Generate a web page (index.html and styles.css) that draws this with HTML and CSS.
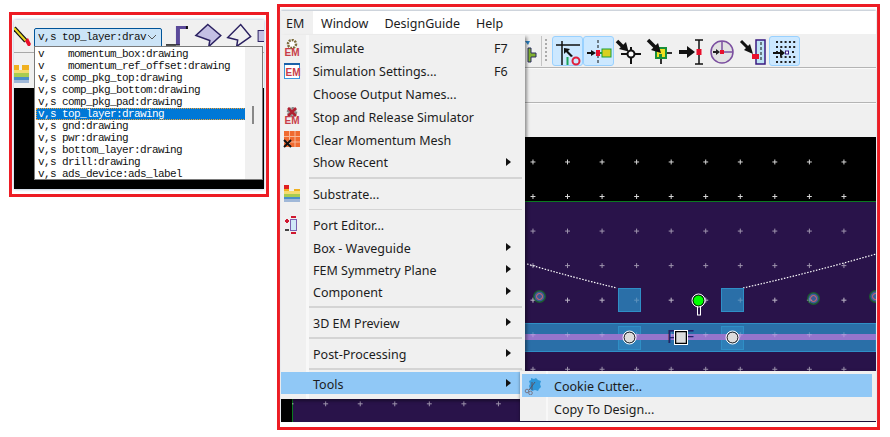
FILE: index.html
```html
<!DOCTYPE html>
<html>
<head>
  <meta charset="utf-8">
  <title>EM menu</title>
  <link rel="stylesheet" href="styles.css">
</head>
<body>
<div class="page">

  <!-- left crop: layer dropdown -->
  <div class="frame frame-left">
    <div class="mini">
      <div class="mini-bar">
        <svg class="pencil" width="18" height="22" viewBox="0 0 18 22">
          <path d="M0 3l12 13" stroke="#111" stroke-width="4.500"/>
          <path d="M0 3l12 13" stroke="#e8d820" stroke-width="2"/>
          <path d="M11 16l3-3 3 6-1 2-2 0z" fill="#e8102c"/>
        </svg>
        <div class="combo">
          <span class="combo-text">v,s top_layer:drav</span>
          <svg width="10" height="6" viewBox="0 0 10 6"><path d="M1 1l4 4 4-4" fill="none" stroke="#555" stroke-width="1"/></svg>
        </div>
        <svg class="mini-icons" width="100" height="26" viewBox="0 0 100 26">
          <path d="M2 22h10" fill="none" stroke="#111" stroke-width="1.500"/>
          <path d="M12 22V3h12v3h-8v16z" fill="#5b4a9a"/>
          <path d="M23 3v3" stroke="#111" stroke-width="2"/>
          <path d="M12 22h4" stroke="#111" stroke-width="1"/>
          <path d="M44 1.500L57 12.500 45 23.500 46 17.500 32 12.500z" fill="#c4c0e4" stroke="#2a2060" stroke-width="1.500"/>
          <path d="M73 23.500L87 13.500 77 1.500 64 14.500 74 17 73 23.500" fill="none" stroke="#2a2060" stroke-width="1.500"/>
          <rect x="94.500" y="7.500" width="8" height="11" fill="#c4c0e4" stroke="#2a2060"/>
        </svg>
      </div>
      <div class="mini-band">
        <svg width="15" height="18" viewBox="0 0 15 18">
          <rect y="0" width="5" height="5" fill="#f0b020"/><rect x="8" y="0" width="7" height="5" fill="#f0b020"/>
          <rect y="5" width="15" height="3" fill="#f4dc70"/><rect y="8" width="15" height="4" fill="#a8cc50"/>
          <rect y="12" width="15" height="3" fill="#4a90c8"/><rect y="15" width="15" height="3" fill="#a0b8d8"/>
        </svg>
      </div>
      <div class="mini-canvas"></div>
      <div class="layer-list">
        <div class="layer-row">v    momentum_box:drawing</div>
        <div class="layer-row">v    momentum_ref_offset:drawing</div>
        <div class="layer-row">v,s comp_pkg_top:drawing</div>
        <div class="layer-row">v,s comp_pkg_bottom:drawing</div>
        <div class="layer-row">v,s comp_pkg_pad:drawing</div>
        <div class="layer-row selected">v,s top_layer:drawing</div>
        <div class="layer-row">v,s gnd:drawing</div>
        <div class="layer-row">v,s pwr:drawing</div>
        <div class="layer-row">v,s bottom_layer:drawing</div>
        <div class="layer-row">v,s drill:drawing</div>
        <div class="layer-row">v,s ads_device:ads_label</div>
        <div class="list-scroll"><div class="list-thumb"></div></div>
      </div>
    </div>
  </div>

  <!-- right crop: EM menu over layout window -->
  <div class="frame frame-right">
    <div class="window">
      <div class="menubar">
        <span class="menubar-item open">EM</span>
        <span class="menubar-item">Window</span>
        <span class="menubar-item">DesignGuide</span>
        <span class="menubar-item">Help</span>
      </div>

      <div class="toolbar">
        <svg class="tool-partial" width="12" height="24" viewBox="0 0 12 24">
          <path d="M0 2h5l-2 4z" fill="#2a80c0"/>
          <path d="M3 9h3v5h5v4H6v5H3z" fill="#80b030" stroke="#2a2a60" stroke-width="1"/>
        </svg>
        <div class="tool-sep"></div>
        <div class="tool-grip"></div>
        <div class="tool on">
          <svg width="31" height="29" viewBox="0 0 31 29">
            <path d="M4 8h24M10 4v24" stroke="#111" stroke-width="1.500" fill="none"/>
            <path d="M12 11l6 1-2 2 5 5-2 1-5-5-2 2z" fill="#111"/>
            <path d="M15.500 20v8" stroke="#1aa55a" stroke-width="2"/>
            <ellipse cx="24" cy="24" rx="3.500" ry="3.500" fill="none" stroke="#e0203c" stroke-width="2"/>
          </svg>
        </div>
        <div class="tool on">
          <svg width="31" height="29" viewBox="0 0 31 29">
            <path d="M15 3v24" stroke="#111" stroke-dasharray="3 2" fill="none"/>
            <path d="M4 15h4v-2l5 3-5 3v-2H4z" fill="#111"/>
            <rect x="13" y="13" width="4" height="6" fill="#e8102c"/>
            <rect x="19" y="12" width="9" height="8" fill="#d8d020" stroke="#1a9f3a"/>
            <path d="M17 16h2" stroke="#1a9f3a" stroke-width="2"/>
          </svg>
        </div>
        <div class="tool">
          <svg width="31" height="29" viewBox="0 0 31 29">
            <path d="M7 17h20M17 10v17" stroke="#111" stroke-width="2"/>
            <circle cx="17" cy="17" r="3.500" fill="#fff" stroke="#111" stroke-width="2"/>
            <path d="M3 4l7 7" stroke="#111" stroke-width="3.500"/>
            <path d="M14.500 14.500L5 12l7-7z" fill="#111"/>
          </svg>
        </div>
        <div class="tool">
          <svg width="31" height="29" viewBox="0 0 31 29">
            <path d="M21 16h6M16 21v6" stroke="#333" stroke-width="2"/>
            <rect x="11" y="11" width="10" height="10" fill="#f0e020" stroke="#1a8f3a" stroke-width="2"/>
            <rect x="14" y="17" width="3" height="3" fill="#1a8f3a"/>
            <path d="M3 3l8 8" stroke="#111" stroke-width="3.500"/>
            <path d="M16 16L6 13l7-7z" fill="#111"/>
          </svg>
        </div>
        <div class="tool">
          <svg width="31" height="29" viewBox="0 0 31 29">
            <path d="M23 3v24M19 3h8M19 27h8" stroke="#111" stroke-width="1.500" fill="none"/>
            <path d="M3 13h8v-4l8 6-8 6v-4H3z" fill="#111"/>
            <rect x="20.500" y="12" width="5" height="6" fill="#e8102c"/>
          </svg>
        </div>
        <div class="tool">
          <svg width="31" height="29" viewBox="0 0 31 29">
            <circle cx="15" cy="15" r="11" fill="#e2e2e2" stroke="#7b4fa0" stroke-width="1.500"/>
            <path d="M15 4v11h11" fill="none" stroke="#7b4fa0" stroke-width="1.500"/>
            <path d="M6 14h3v-2l4 3-4 3v-2H6z" fill="#222"/>
            <rect x="13" y="13" width="4" height="4" fill="#e8102c"/>
          </svg>
        </div>
        <div class="tool">
          <svg width="31" height="29" viewBox="0 0 31 29">
            <path d="M18 3h9v24h-9z" fill="#bfe4f4" stroke="#3a1a80" stroke-width="1.500"/>
            <path d="M23 5v20" stroke="#111" stroke-dasharray="3 2"/>
            <path d="M3 4l7 7" stroke="#111" stroke-width="3"/>
            <path d="M15 17L6 13l6-6z" fill="#111"/>
            <rect x="14" y="17" width="7" height="5" fill="#e8102c"/>
          </svg>
        </div>
        <div class="tool on">
          <svg width="31" height="29" viewBox="0 0 31 29">
            <path d="M7 5h20M7 10h20M7 15h4M23 15h4M7 20h20M7 25h20" stroke="#222" stroke-width="2" stroke-dasharray="2 2.300" fill="none"/>
            <path d="M4 15h7v-3l5 4-5 4v-3H4z" fill="#111"/>
            <rect x="16.500" y="14" width="3" height="3" fill="#fff" stroke="#3a1a80"/>
          </svg>
        </div>
      </div>
      <div class="band band-first"></div>
      <div class="band"></div>

      <svg class="canvas" width="595" height="285" viewBox="281 137 595 285">
        <defs>
          <pattern id="grid" patternUnits="userSpaceOnUse" x="-0.5" y="-0.5" width="34.550" height="34.550" patternTransform="translate(12.750 21.800)">
            <path d="M0 2.500h5M2.500 0v5" stroke="#fff" stroke-width="1" shape-rendering="crispEdges"/>
          </pattern>
          <g id="via">
            <circle r="6.500" fill="#1c5a30"/>
            <circle r="5" fill="#3a5c98"/>
            <circle r="3" fill="none" stroke="#e06868" stroke-width="1"/>
          </g>
        </defs>
        <rect x="281" y="137" width="595" height="64" fill="#000"/>
        <rect x="281" y="201" width="595" height="221" fill="#29134a"/>
        <path d="M281 201.500h595" stroke="#0a7a20" stroke-width="1"/>
        <rect x="281" y="399" width="11" height="23" fill="#000"/>
        <path d="M292.500 399v23" stroke="#0a7a20"/>
        <rect x="292" y="202" width="584" height="220" fill="url(#grid)" opacity="0.55"/>
        <rect x="292" y="137" width="584" height="64" fill="url(#grid)" opacity="0.85"/>
        <path d="M527 264Q575 278 617 288M743 288Q810 273 876 254" fill="none" stroke="#fff" stroke-width="1.200" stroke-dasharray="1.500 1.500"/>
        <rect x="618.500" y="288.500" width="22" height="23" fill="#2a6fa8" stroke="#2f8fc6"/>
        <rect x="721.500" y="288.500" width="22" height="23" fill="#2a6fa8" stroke="#2f8fc6"/>
        <use href="#via" x="539.500" y="296.500"/>
        <use href="#via" x="813.500" y="298.500"/>
        <use href="#via" x="875.500" y="296.500"/>
        <rect x="281" y="323.500" width="595" height="28" fill="#2a6fa8" stroke="#2f8fc6"/>
        <rect x="618.500" y="326.500" width="22" height="23" fill="#2e7fb8" stroke="#2f8fc6"/>
        <rect x="721.500" y="326.500" width="22" height="23" fill="#2e7fb8" stroke="#2f8fc6"/>
        <rect x="281" y="334" width="595" height="6" fill="#9575cc"/>
        <rect x="292" y="288" width="584" height="64" fill="url(#grid)" opacity="0.25"/>
        <text x="667" y="343" class="canvas-label">PF</text>
        <circle cx="629.500" cy="337.500" r="5.500" fill="#dcdcdc" stroke="#000" stroke-width="1"/>
        <circle cx="629.500" cy="337.500" r="6.500" fill="none" stroke="#fff" stroke-width="1"/>
        <circle cx="732.500" cy="337.500" r="5.500" fill="#dcdcdc" stroke="#000" stroke-width="1"/>
        <circle cx="732.500" cy="337.500" r="6.500" fill="none" stroke="#fff" stroke-width="1"/>
        <rect x="675.500" y="331.500" width="11" height="12" fill="#dcdcdc" stroke="#000" stroke-width="1.500"/>
        <rect x="674.500" y="330.500" width="13" height="14" fill="none" stroke="#fff"/>
        <rect x="697.500" y="304" width="3" height="11" fill="#29134a" stroke="#fff"/>
        <circle cx="698.500" cy="300.500" r="5.500" fill="#00ff00" stroke="#000"/>
        <circle cx="698.500" cy="300.500" r="6.500" fill="none" stroke="#fff"/>
      </svg>

      <div class="menu">
        <div class="row"><span class="gutter">
          <svg width="18" height="18" viewBox="0 0 18 18"><circle cx="9" cy="5" r="4" fill="#fff" stroke="#7c6c3c" stroke-width="2.500" stroke-dasharray="2 1"/><text x="1.500" y="16.500" class="em-mark">EM</text></svg>
        </span><span class="label">Simulate</span><span class="key">F7</span></div>
        <div class="row"><span class="gutter">
          <svg width="18" height="18" viewBox="0 0 18 18"><rect x="1.500" y="1.500" width="15" height="15" fill="#fff" stroke="#3a96dc"/><rect x="1" y="1" width="16" height="2" fill="#1a60a8"/><text x="2.500" y="14" class="em-mark">EM</text></svg>
        </span><span class="label">Simulation Settings...</span><span class="key">F6</span></div>
        <div class="row"><span class="gutter"></span><span class="label">Choose Output Names...</span></div>
        <div class="row"><span class="gutter">
          <svg width="18" height="18" viewBox="0 0 18 18"><circle cx="9" cy="5" r="4" fill="#aaa" stroke="#888" stroke-width="2.500" stroke-dasharray="2 1"/><path d="M5 1l8 8M13 1l-8 8" stroke="#b02030" stroke-width="2.500"/><text x="1.500" y="17" class="em-mark">EM</text></svg>
        </span><span class="label">Stop and Release Simulator</span></div>
        <div class="row"><span class="gutter">
          <svg width="18" height="18" viewBox="0 0 18 18"><rect x="1" y="1" width="16" height="16" fill="#f06a30"/><path d="M6.500 1v16M12 1v16M1 6.500h16M1 12h16" stroke="#f8b898" stroke-width="1"/><path d="M1 10l7 7M8 10l-7 7" stroke="#111" stroke-width="2"/></svg>
        </span><span class="label">Clear Momentum Mesh</span></div>
        <div class="row"><span class="gutter"></span><span class="label">Show Recent</span><i class="arrow"></i></div>
        <div class="sep"></div>
        <div class="row"><span class="gutter">
          <svg width="18" height="18" viewBox="0 0 18 18"><rect x="1" y="0" width="5" height="4" fill="#e02020"/><rect x="1" y="4" width="5" height="2" fill="#f0b020"/><rect x="11" y="4" width="6" height="2" fill="#f0b020"/><rect x="1" y="6" width="16" height="3" fill="#f4dc70"/><rect x="1" y="9" width="16" height="3" fill="#a8cc50"/><rect x="1" y="12" width="16" height="2" fill="#4a90c8"/><rect x="1" y="14" width="16" height="3" fill="#a0b8d8"/></svg>
        </span><span class="label">Substrate...</span></div>
        <div class="sep"></div>
        <div class="lower">
        <div class="row"><span class="gutter">
          <svg width="18" height="18" viewBox="0 0 18 18"><rect x="7.500" y="3.500" width="6" height="11" fill="#cfe8f8" stroke="#7a60b0"/><path d="M8 1h5M8 17h5" stroke="#d01830" stroke-width="2"/><path d="M2 5h4M4 3v4" stroke="#d01830" stroke-width="2"/><path d="M2 14h4" stroke="#444" stroke-width="2"/></svg>
        </span><span class="label">Port Editor...</span></div>
        <div class="row"><span class="gutter"></span><span class="label">Box - Waveguide</span><i class="arrow"></i></div>
        <div class="row"><span class="gutter"></span><span class="label">FEM Symmetry Plane</span><i class="arrow"></i></div>
        <div class="row"><span class="gutter"></span><span class="label">Component</span><i class="arrow"></i></div>
        <div class="sep"></div>
        <div class="row"><span class="gutter"></span><span class="label">3D EM Preview</span><i class="arrow"></i></div>
        <div class="sep"></div>
        <div class="row"><span class="gutter"></span><span class="label">Post-Processing</span><i class="arrow"></i></div>
        <div class="sep sep-tight"></div>
        <div class="row active"><span class="gutter"></span><span class="label">Tools</span><i class="arrow"></i></div>
        </div>
      </div>

      <div class="submenu">
        <div class="row active"><span class="gutter">
          <svg width="18" height="18" viewBox="0 0 18 18"><path d="M7 1l3 1 2-1 2 2 3 1-1 3 1 3-2 2-1 2-3-1-3 1-2-2-1-3 1-2-1-3 2-1z" fill="#2f96d8"/><path d="M11 5L5 13M8 5l0 8" stroke="#556" stroke-width="1"/><circle cx="3" cy="14" r="1.800" fill="none" stroke="#778"/><circle cx="6.500" cy="16" r="1.800" fill="none" stroke="#778"/></svg>
        </span><span class="label">Cookie Cutter...</span></div>
        <div class="row"><span class="gutter"></span><span class="label">Copy To Design...</span></div>
      </div>
    </div>
  </div>

</div>
</body>
</html>
```
FILE: styles.css
```css
body {
  margin: 0;
  background: #fff;
  font-family: "Noto Sans", sans-serif;
  font-size: 12.5px;
  color: #1c1c1c;
}

.page {
  display: flex;
  align-items: flex-start;
  gap: 8px;
  padding: 4px 0 0 9px;
}

.frame {
  box-sizing: border-box;
  border: 3px solid #ed1c24;
  background: #fff;
}
.frame-left {
  width: 260px;
  height: 185px;
  margin-top: 8px;
  padding: 5px 2px;
}
.frame-right {
  width: 603px;
  height: 426px;
  padding: 4px 1px 5px;
}

/* left crop */
.mini {
  position: relative;
  display: flex;
  flex-direction: column;
  height: 100%;
  background: #f0f0f0;
  box-shadow: 0 0 3px #9db4d0;
}
.mini-bar {
  display: flex;
  align-items: center;
  height: 33px;
  flex: none;
  box-sizing: border-box;
  border-bottom: 1px solid #a8a8a8;
}
.pencil {
  margin: 0 2px 0 0;
}
.combo {
  display: flex;
  align-items: center;
  justify-content: space-between;
  box-sizing: border-box;
  width: 129px;
  height: 19px;
  margin-top: 2px;
  padding: 0 4px 0 3px;
  background: #cce4f7;
  border: 1px solid #005499;
  border-radius: 2px 2px 0 0;
}
.combo-text {
  font-family: "Liberation Mono", monospace;
  font-size: 11px;
  letter-spacing: -0.6px;
  white-space: pre;
  color: #111;
}
.mini-icons {
  margin-left: 2px;
}
.mini-band {
  display: flex;
  align-items: flex-end;
  height: 35px;
  flex: none;
  padding-bottom: 5px;
  box-sizing: border-box;
}
.mini-canvas {
  flex: 1;
  background: #000;
}
.layer-list {
  position: absolute;
  left: 20px;
  top: 26px;
  box-sizing: border-box;
  width: 229px;
  height: 134px;
  padding: 1px 0 0 1px;
  background: #fff;
  border: 1px solid #7a7a7a;
}
.layer-row {
  box-sizing: border-box;
  width: 210px;
  height: 12px;
  padding-left: 2px;
  font-family: "Liberation Mono", monospace;
  font-size: 11px;
  line-height: 12px;
  letter-spacing: -0.6px;
  white-space: pre;
  color: #111;
}
.layer-row.selected {
  background: #0078d7;
  color: #fff;
  outline: 1px dotted #f0a030;
  outline-offset: -1px;
}
.list-scroll {
  position: absolute;
  right: 0;
  top: 0;
  bottom: 0;
  width: 17px;
  background: #f0f0f0;
}
.list-thumb {
  position: absolute;
  left: 7px;
  top: 59px;
  width: 2px;
  height: 18px;
  background: #888;
}

/* layout window */
.window {
  position: relative;
  display: flex;
  flex-direction: column;
  height: 100%;
  background: #f0f0f0;
  box-shadow: 0 -1px 2px #b8c0cc;
  overflow: hidden;
}
.menubar {
  display: flex;
  height: 23px;
  flex: none;
  background: #fff;
  line-height: 26px;
}
.menubar-item {
  padding: 0 8px;
}
.menubar-item.open {
  width: 32px;
  box-sizing: border-box;
  padding: 0 0 0 5px;
  background: #f0f0f0;
}
.toolbar {
  display: flex;
  align-items: center;
  justify-content: flex-start;
  height: 34px;
  flex: none;
  box-sizing: border-box;
  padding-left: 244px;
  border-bottom: 1px solid #b4b4b4;
}
.tool-partial {
  flex: none;
}
.tool-sep {
  width: 1px;
  height: 30px;
  margin-left: 4px;
  background: #c4c4c4;
}
.tool-grip {
  width: 2px;
  height: 24px;
  margin: 0 5px 0 3px;
  background: repeating-linear-gradient(#aaa 0 2px, transparent 2px 4px);
}
.tool {
  box-sizing: border-box;
  width: 31px;
  height: 30px;
  border: 1px solid transparent;
  flex: none;
}
.tool svg {
  display: block;
  margin: 0 -1px;
}
.tool.on {
  background: #cce8ff;
  border-color: #99d1ff;
  border-radius: 3px;
}
.band {
  height: 34px;
  flex: none;
  box-sizing: border-box;
  border-top: 1px solid #fafafa;
}
.band-first {
  height: 35px;
  border-bottom: 1px solid #b4b4b4;
}
.canvas {
  display: block;
  flex: none;
}
.canvas-label {
  font-family: "Liberation Sans", sans-serif;
  font-size: 19px;
  fill: #22206a;
  letter-spacing: 3px;
}
.em-mark {
  font-family: "Liberation Sans", sans-serif;
  font-size: 10px;
  font-weight: bold;
  fill: #c83c48;
}

/* menus */
.menu {
  position: absolute;
  left: 0;
  top: 24px;
  width: 244px;
  height: 364px;
  box-sizing: border-box;
  padding-top: 1.6px;
  background: linear-gradient(90deg, #f0f0f0 25px, #f8f8f8 25px 28px, #f0f0f0 28px);
  box-shadow: 2px 2px 3px rgba(0, 0, 0, 0.4);
}
.row {
  display: flex;
  align-items: center;
  height: 22.8px;
  padding-right: 14px;
}
.lower {
  margin-top: 1px;
}
.lower .row {
  height: 22.2px;
}
.gutter {
  display: flex;
  align-items: center;
  justify-content: center;
  flex: none;
  width: 22px;
  height: 100%;
  margin-right: 10px;
}
.label {
  flex: 1;
  padding-top: 2px;
  white-space: nowrap;
}
.key {
  width: 17px;
  padding-top: 2px;
}
.arrow {
  flex: none;
  width: 0;
  height: 0;
  border-left: 5px solid #111;
  border-top: 4px solid transparent;
  border-bottom: 4px solid transparent;
}
.sep {
  height: 1.6px;
  margin: 3.6px 3px 3.6px 28px;
  background: #d4d4d4;
}
.sep-tight {
  margin-bottom: 2.6px;
}
.row.active {
  background: #90c8f6;
}
.submenu {
  position: absolute;
  left: 239px;
  top: 360px;
  width: 356px;
  height: 50px;
  box-sizing: border-box;
  padding: 3px 4px 0 2px;
  background: linear-gradient(90deg, #f0f0f0 26px, #f8f8f8 26px 28px, #f0f0f0 28px);
  box-shadow: 0 1px 3px rgba(0, 0, 0, 0.4);
}
.submenu .row {
  height: 23px;
  padding-right: 0;
}
```
